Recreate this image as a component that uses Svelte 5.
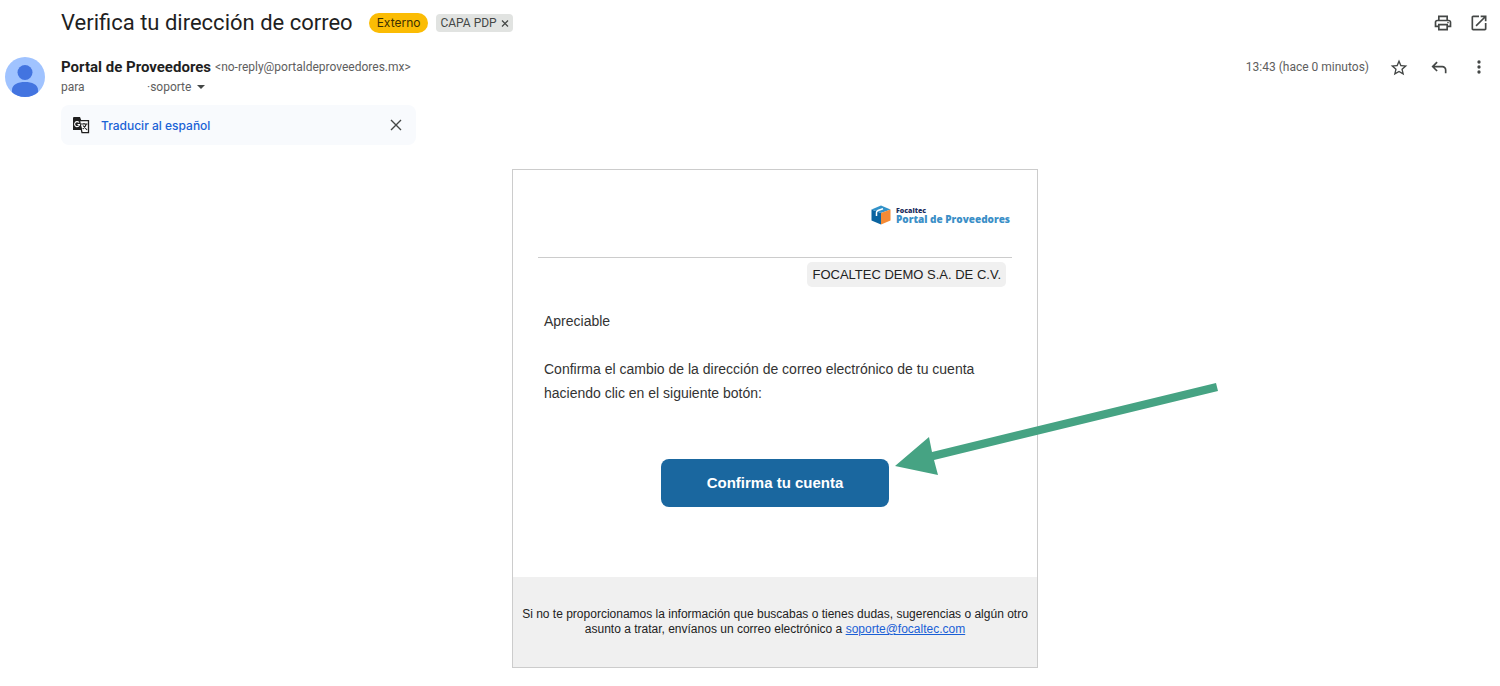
<script lang="ts">
    const subject = "Verifica tu dirección de correo";

    const sender = {
        name: "Portal de Proveedores",
        address: "no-reply@portaldeproveedores.mx",
    };

    let showTranslate = $state(true);
    let labels = $state(["CAPA PDP"]);

    function removeLabel(label: string) {
        labels = labels.filter((l) => l !== label);
    }
</script>

<main class="mail">
    <header class="subject-row">
        <h1>{subject}</h1>
        <span class="external">Externo</span>
        {#each labels as label (label)}
            <span class="label">
                {label}
                <button aria-label="Quitar etiqueta" onclick={() => removeLabel(label)}>
                    <svg viewBox="0 0 8 8" width="8" height="8">
                        <path d="M1 1.500l6 6M7 1.500L1 7.500" stroke="currentColor" stroke-width="1.200" />
                    </svg>
                </button>
            </span>
        {/each}
        <div class="tools">
            <button class="icon" aria-label="Imprimir">
                <svg viewBox="0 0 24 24" width="20" height="20">
                    <path
                        d="M19 8h-1V3H6v5H5c-1.660 0-3 1.340-3 3v6h4v4h12v-4h4v-6c0-1.660-1.340-3-3-3zM8 5h8v3H8V5zm8 14H8v-4h8v4zm2-4v-2H6v2H4v-4c0-.55.45-1 1-1h14c.55 0 1 .45 1 1v4h-2z"
                    />
                    <circle cx="18" cy="11.500" r="1" />
                </svg>
            </button>
            <button class="icon" aria-label="Abrir en una ventana nueva">
                <svg viewBox="0 0 24 24" width="20" height="20">
                    <path
                        d="M19 19H5V5h7V3H5c-1.110 0-2 .9-2 2v14c0 1.100.89 2 2 2h14c1.100 0 2-.9 2-2v-7h-2v7zM14 3v2h3.590l-9.830 9.830 1.410 1.410L19 6.410V10h2V3h-7z"
                    />
                </svg>
            </button>
        </div>
    </header>

    <section class="sender-row">
        <svg class="avatar" viewBox="0 0 40 40" width="40" height="40">
            <defs>
                <clipPath id="avatar-clip"><circle cx="20" cy="20" r="20" /></clipPath>
            </defs>
            <g clip-path="url(#avatar-clip)">
                <rect width="40" height="40" fill="#a0c3ff" />
                <circle cx="20" cy="15.500" r="7.500" fill="#4374e0" />
                <path d="M7 33c0-5.500 6-8 13-8s13 2.500 13 8v7H7z" fill="#4374e0" />
            </g>
        </svg>
        <div class="sender">
            <div class="from">
                <strong>{sender.name}</strong>
                <span>&lt;{sender.address}&gt;</span>
            </div>
            <div class="to">
                <span class="to-label">para</span>
                <span>·soporte</span>
                <button aria-label="Mostrar detalles">
                    <svg viewBox="0 0 8 4" width="8" height="4"><path d="M0 0h8L4 4z" /></svg>
                </button>
            </div>
        </div>
        <time>13:43 (hace 0 minutos)</time>
        <div class="tools message-tools">
            <button class="icon" aria-label="Destacar">
                <svg viewBox="0 -1 24 24" width="20" height="20">
                    <path
                        d="M22 9.240l-7.190-.62L12 2 9.190 8.630 2 9.240l5.460 4.730L5.820 21 12 17.270 18.180 21l-1.630-7.030L22 9.240zM12 15.400l-3.760 2.270 1-4.280-3.320-2.880 4.380-.38L12 6.100l1.710 4.040 4.380.38-3.320 2.880 1 4.280L12 15.400z"
                    />
                </svg>
            </button>
            <button class="icon" aria-label="Responder">
                <svg viewBox="0 -980 960 960" width="20" height="20">
                    <path
                        d="M760-200v-160q0-50-35-85t-85-35H273l144 144-57 56-240-240 240-240 57 56-144 144h367q83 0 141.500 58.500T840-360v160h-80Z"
                    />
                </svg>
            </button>
            <button class="icon" aria-label="Más">
                <svg viewBox="0 0 24 24" width="20" height="20">
                    <circle cx="12" cy="6" r="2" />
                    <circle cx="12" cy="12" r="2" />
                    <circle cx="12" cy="18" r="2" />
                </svg>
            </button>
        </div>
    </section>

    <div class="body">
        {#if showTranslate}
            <div class="translate">
                <svg viewBox="0 0 18 18" width="18" height="18" fill="none">
                    <path d="M2 1h6l1.500 4v9H2a1 1 0 0 1-1-1V2a1 1 0 0 1 1-1z" fill="#1f1f1f" />
                    <path d="M7.500 4.700h9v12h-6.500z" fill="#fff" stroke="#1f1f1f" stroke-width="1.300" />
                    <path d="M1 5h6.500l2.500 9H1z" fill="#1f1f1f" />
                    <path d="M7 6.500A2.500 2.500 0 1 0 7.600 8.500H5.500" stroke="#fff" stroke-width="1.100" />
                    <path
                        d="M9 8h6.500M12 7v1M14.300 8c-.6 2.200-1.800 3.600-3.600 5M11 9.500l4 4.500"
                        stroke="#1f1f1f"
                        stroke-width="1.100"
                    />
                </svg>
                <a href="#traducir">Traducir al español</a>
                <button class="icon" aria-label="Cerrar" onclick={() => (showTranslate = false)}>
                    <svg viewBox="0 0 12 12" width="12" height="12">
                        <path d="M1 1l10 10M11 1L1 11" stroke="currentColor" stroke-width="1.400" />
                    </svg>
                </button>
            </div>
        {/if}

        <article class="card">
            <div class="card-main">
                <div class="brand">
                    <svg viewBox="0 0 20 20" width="20" height="20">
                        <path d="M0.500 4.500L10 8v11.500L0.500 15.500z" fill="#0a64a0" />
                        <path d="M0.500 4.500L10 0.500l9.500 4L10 8z" fill="#3292c9" />
                        <path d="M10 8l9.500-3.500v11L10 19.500z" fill="#f58a34" />
                        <path
                            d="M5.500 11V7.500c0-1 .5-1.500 1.500-2l5-1.800"
                            fill="none"
                            stroke="#fff"
                            stroke-width="1.500"
                        />
                    </svg>
                    <div class="brand-text">
                        <span class="company">Focaltec</span>
                        <span class="product">Portal de Proveedores</span>
                    </div>
                </div>
                <hr />
                <div class="client">FOCALTEC DEMO S.A. DE C.V.</div>
                <div class="message">
                    <p>Apreciable</p>
                    <p>
                        Confirma el cambio de la dirección de correo electrónico de tu cuenta
                        haciendo clic en el siguiente botón:
                    </p>
                </div>
                <div class="confirm">
                    <button>Confirma tu cuenta</button>
                    <svg class="pointer" viewBox="0 0 324 94" width="324" height="94">
                        <path d="M0 83L34 54l3 15L321 0l2 8L39 77l4 15z" fill="#46a383" />
                    </svg>
                </div>
            </div>
            <footer>
                Si no te proporcionamos la información que buscabas o tienes dudas, sugerencias o
                algún otro asunto a tratar, envíanos un correo electrónico a
                <a href="mailto:soporte@focaltec.com">soporte@focaltec.com</a>
            </footer>
        </article>
    </div>
</main>

<style>
    :global(body) {
        background: #fff;
        overflow-x: hidden;
    }

    .mail {
        font-family: Roboto, "Open Sans", sans-serif;
        font-size: 12px;
        color: #5e5e5e;
        padding: 9px 11px 18px 5px;
    }

    button {
        font: inherit;
        color: inherit;
        background: none;
        border: 0;
        padding: 0;
        cursor: pointer;
    }

    svg {
        display: block;
        flex: none;
    }

    .icon {
        color: #444746;
        display: block;
    }

    .icon svg {
        fill: currentColor;
    }

    .subject-row {
        display: flex;
        align-items: center;
        height: 28px;
        padding-left: 56px;
    }

    h1 {
        font-size: 22px;
        font-weight: 400;
        line-height: 28px;
        color: #1f1f1f;
        margin: 0 16px 0 0;
    }

    .external {
        font-family: Inter, Roboto, sans-serif;
        background: #fbbc04;
        color: #3c3000;
        border-radius: 10px;
        line-height: 20px;
        padding: 0 8px;
        margin-right: 8px;
    }

    .label {
        display: flex;
        align-items: center;
        gap: 4px;
        background: #e1e3e1;
        color: #444746;
        border-radius: 4px;
        line-height: 18px;
        padding: 0 4px;
    }

    .tools {
        display: flex;
        gap: 16px;
        margin-left: auto;
    }

    .sender-row {
        display: flex;
        align-items: flex-start;
        margin-top: 20px;
    }

    .sender {
        margin-left: 16px;
        line-height: 20px;
    }

    .from {
        display: flex;
        gap: 4px;
    }

    .from strong {
        font-size: 15px;
        color: #1f1f1f;
    }

    .to {
        display: flex;
        align-items: center;
    }

    .to-label {
        width: 86px;
    }

    .to button {
        margin-left: 6px;
    }

    .to svg {
        fill: #444746;
    }

    time {
        margin-left: auto;
        line-height: 20px;
    }

    .message-tools {
        gap: 20px;
        margin-left: 20px;
    }

    .body {
        margin-left: 56px;
        margin-top: 8px;
    }

    .translate {
        display: flex;
        align-items: center;
        width: 355px;
        height: 40px;
        box-sizing: border-box;
        padding: 0 14px 0 11px;
        border-radius: 8px;
        background: #f8fafd;
    }

    .translate a {
        margin-left: 11px;
        color: #1a62d6;
        font-family: Inter, Roboto, sans-serif;
        font-weight: 500;
        text-decoration: none;
    }

    .translate button {
        margin-left: auto;
    }

    .card {
        max-width: 524px;
        margin: 24px auto 0;
        border: 1px solid #ccc;
        font-family: "Liberation Sans", Arial, sans-serif;
    }

    .card-main {
        padding: 35px 25px 70px;
    }

    .brand {
        display: flex;
        justify-content: flex-end;
        align-items: center;
        gap: 5px;
        padding-right: 2px;
    }

    .brand-text {
        display: flex;
        flex-direction: column;
        font-family: "Open Sans", Inter, sans-serif;
        font-weight: 800;
    }

    .company {
        font-size: 7px;
        line-height: 7px;
        color: #1d2d5c;
    }

    .product {
        font-size: 10px;
        line-height: 10px;
        color: #3b8fc7;
    }

    hr {
        border: 0;
        border-top: 1px solid #ccc;
        margin: 32px 0 4px;
    }

    .client {
        width: fit-content;
        margin: 0 6px 0 auto;
        padding: 0 5px;
        border-radius: 5px;
        background: #f0f0f0;
        color: #222;
        font-size: 13px;
        line-height: 25px;
    }

    .message {
        padding: 22px 6px 0;
        font-size: 14px;
        line-height: 24px;
        color: #333;
    }

    p {
        margin: 0 0 24px;
    }

    .confirm {
        position: relative;
        width: 228px;
        margin: 54px auto 0;
    }

    .confirm button {
        width: 100%;
        border-radius: 8px;
        background: #1a679f;
        color: #fff;
        font-size: 15px;
        font-weight: 700;
        line-height: 48px;
    }

    .pointer {
        position: absolute;
        left: 234px;
        top: -76px;
        pointer-events: none;
    }

    footer {
        background: #f0f0f0;
        color: #222;
        font-size: 12px;
        line-height: 15px;
        text-align: center;
        padding: 30px 8px;
    }

    footer a {
        color: #1a5fd6;
    }
</style>
